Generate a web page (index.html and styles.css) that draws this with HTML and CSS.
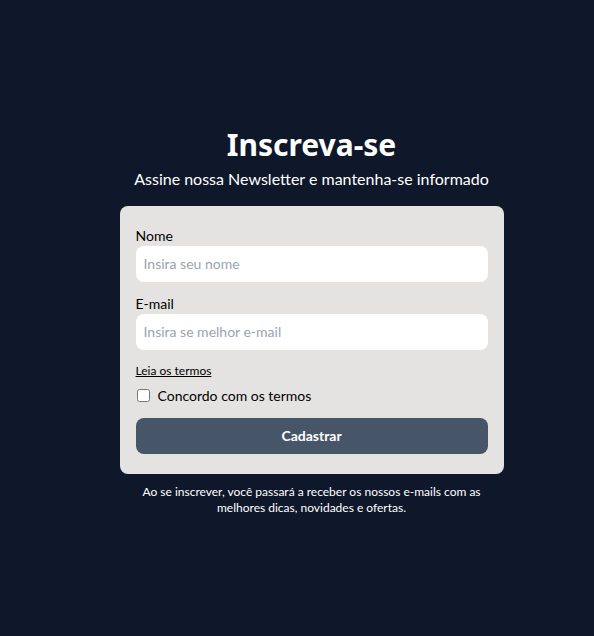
FILE: index.html
```html
<!DOCTYPE html>
<html lang="pt-BR">
<head>
<meta charset="utf-8">
<title>Inscreva-se</title>
<link rel="stylesheet" href="styles.css">
</head>
<body>
<main class="page">
  <section class="wrap">
    <h1 class="title">Inscreva-se</h1>
    <p class="subtitle">Assine nossa Newsletter e mantenha-se informado</p>
    <form class="card">
      <div class="field">
        <label class="label" for="nome">Nome</label>
        <input class="input" id="nome" type="text" placeholder="Insira seu nome">
      </div>
      <div class="field">
        <label class="label" for="email">E-mail</label>
        <input class="input" id="email" type="email" placeholder="Insira se melhor e-mail">
      </div>
      <a class="terms" href="#">Leia os termos</a>
      <label class="check">
        <input class="checkbox" type="checkbox">
        <span>Concordo com os termos</span>
      </label>
      <button class="button" type="button">Cadastrar</button>
    </form>
    <p class="note">Ao se inscrever, você passará a receber os nossos e-mails com as melhores dicas, novidades e ofertas.</p>
  </section>
</main>
</body>
</html>
```
FILE: styles.css
```css
* { box-sizing: border-box; }
html, body { margin: 0; padding: 0; }
body {
  background: #0f172a;
  font-family: "Lato", "Noto Sans", sans-serif;
  color: #fff;
}
.page {
  min-height: 636px;
  display: flex;
  align-items: center;
  justify-content: center;
  padding-left: 29px;
  padding-top: 6px;
}
.wrap {
  width: 384px;
  display: flex;
  flex-direction: column;
  align-items: center;
}
.title {
  margin: 0;
  font-family: "Noto Sans", "Lato", sans-serif;
  font-size: 30px;
  line-height: 36px;
  font-weight: 700;
}
.subtitle {
  margin: 4px 0 0;
  font-size: 16px;
  line-height: 24px;
}
.card {
  margin-top: 15px;
  width: 384px;
  background: #e5e3e1;
  border-radius: 8px;
  padding: 20px 16px;
  display: flex;
  flex-direction: column;
  color: #000;
}
.field {
  display: flex;
  flex-direction: column;
  margin-bottom: 12px;
}
.label {
  font-size: 14px;
  line-height: 20px;
}
.input {
  height: 36px;
  border: none;
  border-radius: 8px;
  background: #fff;
  padding: 0 8px;
  font-family: inherit;
  font-size: 14px;
  color: #000;
  outline: none;
}
.input::placeholder { color: #9ca3af; }
.terms {
  margin-top: 1px;
  font-size: 12px;
  line-height: 16px;
  color: #000;
  text-decoration: underline;
  align-self: flex-start;
}
.check {
  margin-top: 7px;
  display: flex;
  align-items: center;
  gap: 8px;
  font-size: 14px;
  line-height: 20px;
}
.checkbox {
  margin: 0 0 0 1px;
  width: 13px;
  height: 13px;
}
.button {
  margin-top: 12px;
  height: 36px;
  border: none;
  border-radius: 8px;
  background: #475569;
  color: #fff;
  font-family: inherit;
  font-size: 14px;
  font-weight: 700;
}
.note {
  margin: 10px 0 0;
  font-size: 12px;
  line-height: 16px;
  text-align: center;
  padding: 0 16px;
}
```
